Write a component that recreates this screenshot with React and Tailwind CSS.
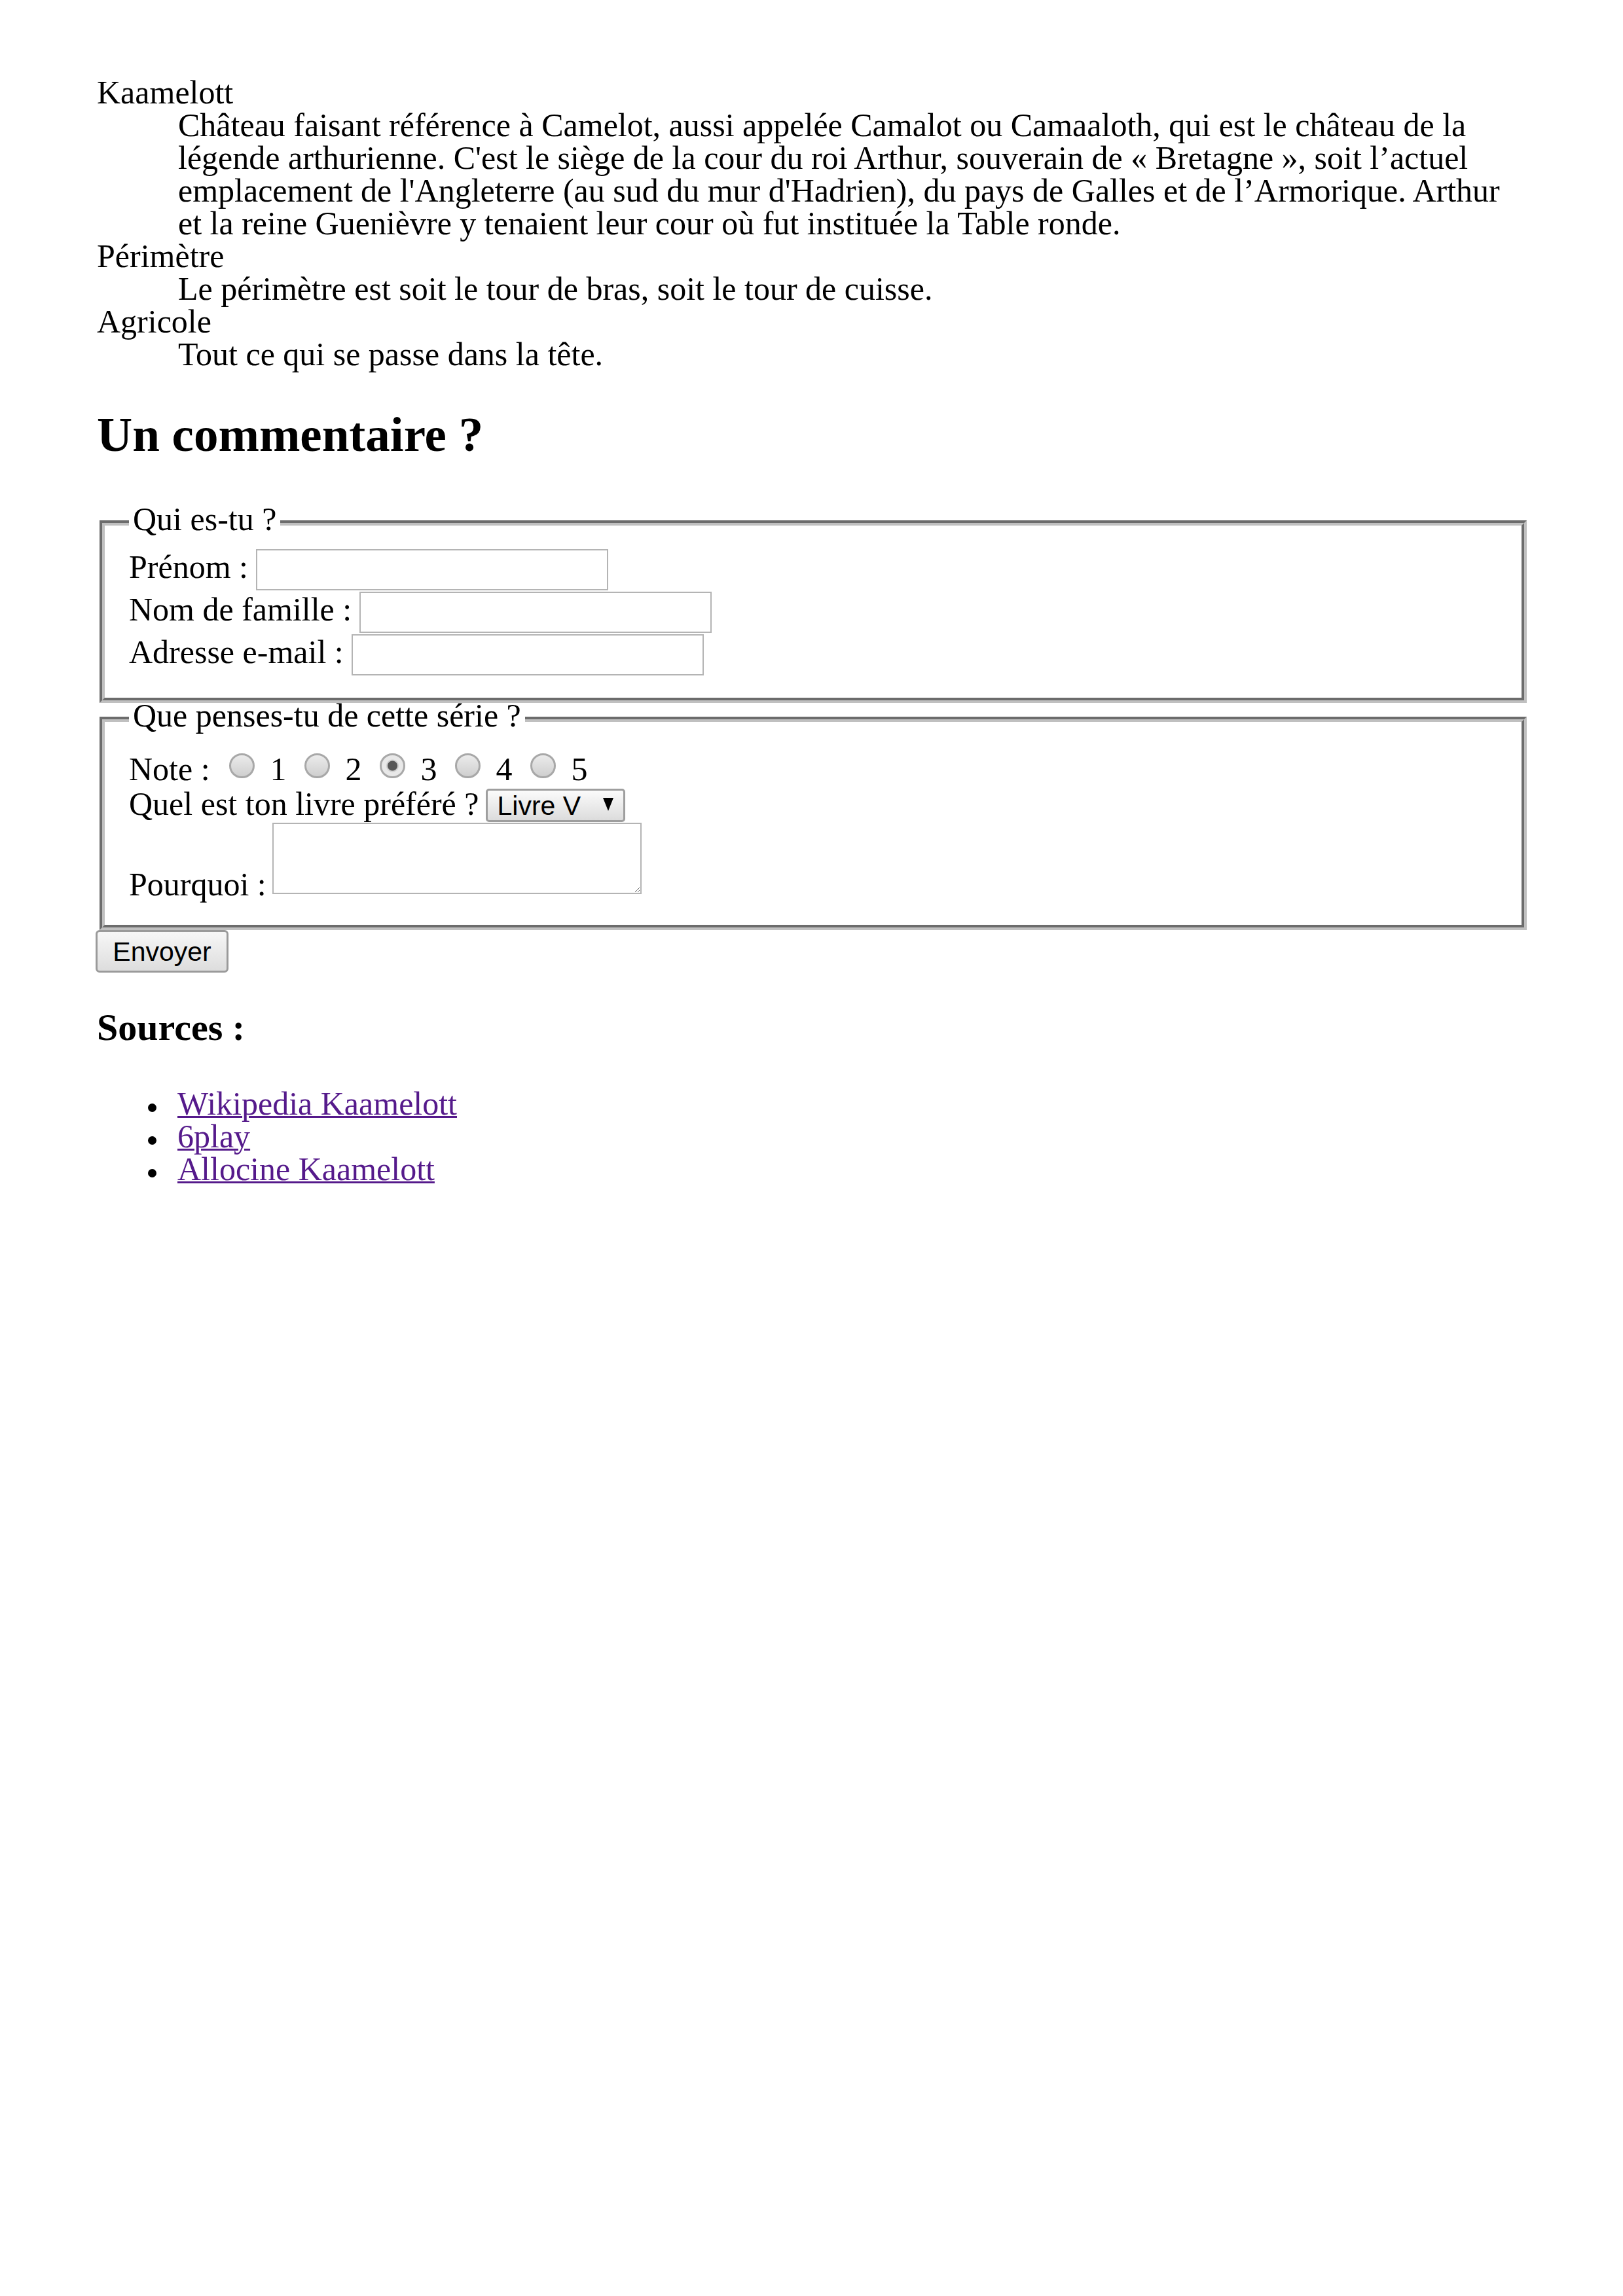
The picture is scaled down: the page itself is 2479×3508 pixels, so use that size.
import React from "react";

const radioClass =
  "mt-[1px] h-[38px] w-[39px] shrink-0 appearance-none rounded-full border-[3px] border-[#a8a8a8] bg-[linear-gradient(#ebebeb,#cfcfcf)] checked:bg-[radial-gradient(circle,#575757_0_7px,#cfcfcf_8px_9px,#e8e8e8_10px)]";

const textInputClass =
  "ml-[12px] h-[63px] w-[538px] border-2 border-[#b4b4b4] bg-white";

const bulletClass =
  "relative before:absolute before:left-[-45px] before:top-[25px] before:h-[13px] before:w-[13px] before:rounded-full before:bg-black before:content-['']";

export default function App() {
  const notes = [1, 2, 3, 4, 5];

  return (
    <div className="min-h-screen bg-white pb-[200px] pl-[148px] pr-[143px] pt-[116px] font-['Liberation_Serif',serif] text-[50px] leading-[50px] text-black">
      <dl>
        <dt>Kaamelott</dt>
        <dd className="ml-[124px] mr-[14px]">
          Château faisant référence à Camelot, aussi appelée Camalot ou
          Camaaloth, qui est le château de la légende arthurienne. C'est le
          siège de la cour du roi Arthur, souverain de «&nbsp;Bretagne&nbsp;»,
          soit l’actuel emplacement de l'Angleterre (au sud du mur d'Hadrien),
          du pays de Galles et de l’Armorique. Arthur et la reine Guenièvre y
          tenaient leur cour où fut instituée la Table ronde.
        </dd>
        <dt>Périmètre</dt>
        <dd className="ml-[124px]">
          Le périmètre est soit le tour de bras, soit le tour de cuisse.
        </dd>
        <dt>Agricole</dt>
        <dd className="ml-[124px]">Tout ce qui se passe dans la tête.</dd>
      </dl>

      <h2 className="mt-[59px] text-[75px] font-bold leading-[77px]">
        Un commentaire ?
      </h2>

      <form className="mt-[72px]" onSubmit={(e) => e.preventDefault()}>
        <fieldset className="mx-[4px] border-[8px] border-[#c0c0c0] pb-[33px] pl-[37px] pr-[37px] pt-[14px] [border-style:groove]">
          <legend className="px-[6px] pb-[12px] leading-[38px]">Qui es-tu ?</legend>
          <div className="flex h-[65px] items-center">
            <label htmlFor="prenom" className="mb-[10px]">Prénom :</label>
            <input id="prenom" type="text" className={textInputClass} />
          </div>
          <div className="flex h-[65px] items-center">
            <label htmlFor="nom" className="mb-[10px]">Nom de famille :</label>
            <input id="nom" type="text" className={textInputClass} />
          </div>
          <div className="flex h-[65px] items-center">
            <label htmlFor="email" className="mb-[10px]">Adresse e-mail :</label>
            <input id="email" type="email" className={textInputClass} />
          </div>
        </fieldset>

        <fieldset className="mx-[4px] border-[8px] border-[#c0c0c0] pb-[37px] pl-[37px] pr-[37px] pt-[26px] [border-style:groove]">
          <legend className="px-[6px] pb-[12px] leading-[38px]">
            Que penses-tu de cette série ?
          </legend>

          <div className="flex h-[53px] items-start">
            <span>Note :</span>
            {notes.map((n) => (
              <React.Fragment key={n}>
                <input
                  type="radio"
                  name="note"
                  value={n}
                  defaultChecked={n === 3}
                  className={`${radioClass} ${n === 1 ? "ml-[29px]" : "ml-[27px]"}`}
                />
                <span className="ml-[24px]">{n}</span>
              </React.Fragment>
            ))}
          </div>

          <div className="flex h-[54px] items-start">
            <label htmlFor="livre">Quel est ton livre préféré ?</label>
            <span className="relative ml-[11px] mt-[2px] inline-flex">
              <select
                id="livre"
                defaultValue="5"
                className="h-[51px] w-[213px] appearance-none rounded-[5px] border-[3px] border-[#9e9e9e] bg-[linear-gradient(#fbfbfb,#dcdcdc)] pl-[14px] font-['Liberation_Sans',Arial,sans-serif] text-[41px] leading-[44px] text-black"
              >
                <option value="1">Livre I</option>
                <option value="2">Livre II</option>
                <option value="3">Livre III</option>
                <option value="4">Livre IV</option>
                <option value="5">Livre V</option>
                <option value="6">Livre VI</option>
              </select>
              <svg
                className="pointer-events-none absolute right-[18px] top-[14px]"
                width="16"
                height="20"
                viewBox="0 0 16 20"
              >
                <polygon points="0,0 16,0 8,20" fill="#000" />
              </svg>
            </span>
          </div>

          <div className="flex items-end">
            <label htmlFor="pourquoi">Pourquoi :</label>
            <textarea
              id="pourquoi"
              className="mb-[10px] ml-[9px] h-[109px] w-[564px] resize border-2 border-[#b4b4b4] bg-white"
            />
          </div>
        </fieldset>

        <button
          type="submit"
          className="-ml-[2px] flex h-[65px] w-[203px] items-center justify-center rounded-[6px] border-[3px] border-[#9a9a9a] bg-[linear-gradient(#f7f7f7,#dddddd)] font-['Liberation_Sans',Arial,sans-serif] text-[41px] leading-[44px] text-black"
        >
          Envoyer
        </button>
      </form>

      <h3 className="mt-[55px] text-[58px] font-bold leading-[58px]">Sources :</h3>

      <ul className="mt-[62px] list-none pl-[123px]">
        <li className={bulletClass}>
          <a href="#wikipedia" className="text-[#551a8b] underline decoration-[3px]">
            Wikipedia Kaamelott
          </a>
        </li>
        <li className={bulletClass}>
          <a href="#6play" className="text-[#551a8b] underline decoration-[3px]">
            6play
          </a>
        </li>
        <li className={bulletClass}>
          <a href="#allocine" className="text-[#551a8b] underline decoration-[3px]">
            Allocine Kaamelott
          </a>
        </li>
      </ul>
    </div>
  );
}
